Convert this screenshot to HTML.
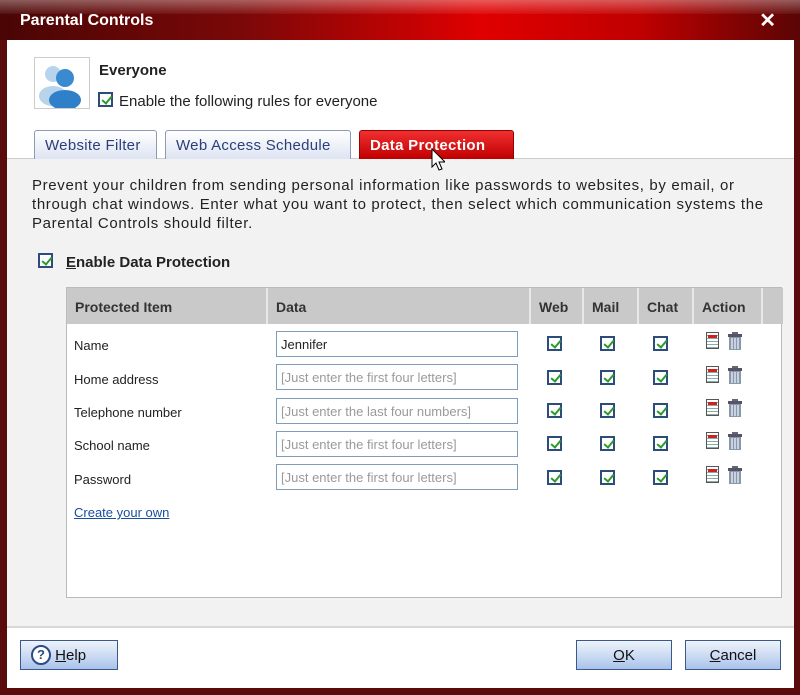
<!DOCTYPE html>
<html><head><meta charset="utf-8"><style>
*{box-sizing:border-box;margin:0;padding:0}
body{width:800px;height:695px;overflow:hidden;background:#5a0c0c;font-family:"Liberation Sans",sans-serif;font-size:14px;color:#222;position:relative}
.title{position:absolute;left:0;top:0;width:800px;height:40px;background:linear-gradient(90deg,#4a0505 0%,#7a0808 30%,#e00000 60%,#c00000 80%,#5a0505 100%);}
.title:before{content:"";position:absolute;left:0;top:0;right:0;height:14px;background:linear-gradient(180deg,rgba(255,255,255,.35),rgba(255,255,255,.05))}
.title span{position:absolute;left:20px;top:12px;color:#fff;font-weight:bold;font-size:16px}
.title b{position:absolute;right:24px;top:8px;color:#fff;font-size:20px}
.win{position:absolute;left:7px;top:40px;width:787px;height:648px;background:#fff}
.gray{position:absolute;left:7px;top:158px;width:787px;height:470px;background:#f2f2f2;border-top:1px solid #ccc;border-bottom:2px solid #d8d8d8}
.abs{position:absolute}
.cb{position:absolute;width:15px;height:15px;border:2px solid #2c4d7a;background:#fff;}
.cb:after{content:"";position:absolute;left:4px;top:0px;width:4px;height:8px;border:solid #2a9a2a;border-width:0 2.5px 2.5px 0;transform:rotate(40deg)}
.tab{position:absolute;top:130px;height:29px;border:1px solid #8a9ab8;border-bottom:none;border-radius:3px 3px 0 0;background:linear-gradient(#fff,#dde4f2);color:#2b3f7a;font-size:15px;padding:6px 10px 0;letter-spacing:.3px}
.tab.on{background:linear-gradient(#f03030,#c00000);color:#fff;font-weight:bold;border-color:#900}
.tbl{position:absolute;left:66px;top:287px;width:716px;height:311px;background:#fff;border:1px solid #bbb}
.hd{position:absolute;top:0;height:36px;background:#c9c9c9;font-weight:bold;font-size:14px;color:#333;padding:11px 8px;border-right:2px solid #e8e8e8}
.lbl{position:absolute;left:74px;font-size:13px;color:#222}
.inp{position:absolute;left:276px;width:242px;height:26px;border:1px solid #7f9db9;background:#fff;font-size:13px;color:#9a9a9a;padding:5px 4px}
.btn{position:absolute;top:640px;height:30px;border:1px solid #3a5a8a;background:linear-gradient(#eef3fb,#cddcf3 50%,#a9c2ea);font-size:15px;color:#111;text-align:center;padding-top:6px}
.ic1{position:absolute;width:13px;height:17px;border:1px solid #555;background:repeating-linear-gradient(#fff 0 2px,#8aa 2px 3px)}
.ic1:before{content:"";position:absolute;left:1px;top:2px;width:9px;height:3px;background:#d02020}
.ic2{position:absolute;width:16px;height:18px}
</style></head><body>
<div class="title"><span>Parental Controls</span><b>✕</b></div>
<div class="win"></div>
<div class="gray"></div>
<div class="abs" style="left:34px;top:57px;width:56px;height:52px;border:1px solid #ccc;background:#fff">
<svg width="54" height="50"><circle cx="18" cy="16" r="8" fill="#b8d4ec"/><ellipse cx="18" cy="38" rx="14" ry="10" fill="#b8d4ec"/><circle cx="30" cy="20" r="9" fill="#3a8ad0"/><ellipse cx="30" cy="42" rx="16" ry="10" fill="#2f80c8"/></svg></div>
<div class="abs" style="left:99px;top:62px;font-weight:bold;font-size:15px">Everyone</div>
<div class="cb" style="left:98px;top:92px"></div>
<div class="abs" style="left:119px;top:93px;font-size:15px">Enable the following rules for everyone</div>
<div class="tab" style="left:34px;width:123px">Website Filter</div>
<div class="tab" style="left:165px;width:186px">Web Access Schedule</div>
<div class="tab on" style="left:359px;width:155px">Data Protection</div>
<div class="abs" style="left:32px;top:176px;width:760px;font-size:15px;line-height:19px;color:#222;white-space:nowrap;letter-spacing:.65px">Prevent your children from sending personal information like passwords to websites, by email, or<br>through chat windows. Enter what you want to protect, then select which communication systems the<br>Parental Controls should filter.</div>
<div class="cb" style="left:38px;top:253px"></div>
<div class="abs" style="left:66px;top:254px;font-weight:bold;font-size:15px"><u>E</u>nable Data Protection</div>
<div class="tbl">
<div class="hd" style="left:0;width:201px">Protected Item</div>
<div class="hd" style="left:201px;width:263px">Data</div>
<div class="hd" style="left:464px;width:53px">Web</div>
<div class="hd" style="left:517px;width:55px">Mail</div>
<div class="hd" style="left:572px;width:55px">Chat</div>
<div class="hd" style="left:627px;width:69px">Action</div>
<div class="hd" style="left:696px;width:20px;border-right:none"></div>
</div>
<div class="lbl" style="top:338px">Name</div>
<div class="lbl" style="top:372px">Home address</div>
<div class="lbl" style="top:405px">Telephone number</div>
<div class="lbl" style="top:438px">School name</div>
<div class="lbl" style="top:472px">Password</div>
<div class="inp" style="top:331px;color:#222">Jennifer</div>
<div class="inp" style="top:364px">[Just enter the first four letters]</div>
<div class="inp" style="top:398px">[Just enter the last four numbers]</div>
<div class="inp" style="top:431px">[Just enter the first four letters]</div>
<div class="inp" style="top:464px">[Just enter the first four letters]</div>
<div id="rows"></div>
<script>
var ys=[336,370,403,436,470],h="";
ys.forEach(function(y){[547,600,653].forEach(function(x){h+='<div class="cb" style="left:'+x+'px;top:'+y+'px"></div>';});
h+='<div class="ic1" style="left:706px;top:'+(y-4)+'px"></div>';
h+='<svg class="ic2" style="left:727px;top:'+(y-4)+'px" viewBox="0 0 16 18"><rect x="5" y="0" width="6" height="3" fill="#667"/><rect x="1" y="2" width="14" height="3" fill="#556"/><rect x="2" y="5" width="12" height="13" fill="#8899aa"/><path d="M5 6v11M8 6v11M11 6v11" stroke="#eef" stroke-width="1.3"/></svg>';});
document.getElementById('rows').innerHTML=h;
</script>
<div class="abs" style="left:74px;top:505px;font-size:13px;color:#1a4fa0;text-decoration:underline">Create your own</div>
<div class="btn" style="left:20px;width:98px;text-align:left;padding-left:10px"><span style="display:inline-block;width:20px;height:20px;border:2px solid #2b4a8a;border-radius:50%;background:#fff;text-align:center;font-weight:bold;font-size:13px;line-height:16px;color:#2b4a8a;margin-top:-3px;vertical-align:middle">?</span> <u>H</u>elp</div>
<div class="btn" style="left:576px;width:96px"><u>O</u>K</div>
<div class="btn" style="left:685px;width:96px"><u>C</u>ancel</div>
<svg class="abs" style="left:431px;top:148px" width="14" height="26"><path d="M1 1v18l4-4 3 7 3-1-3-7h6z" fill="#fff" stroke="#000"/></svg>
</body></html>
